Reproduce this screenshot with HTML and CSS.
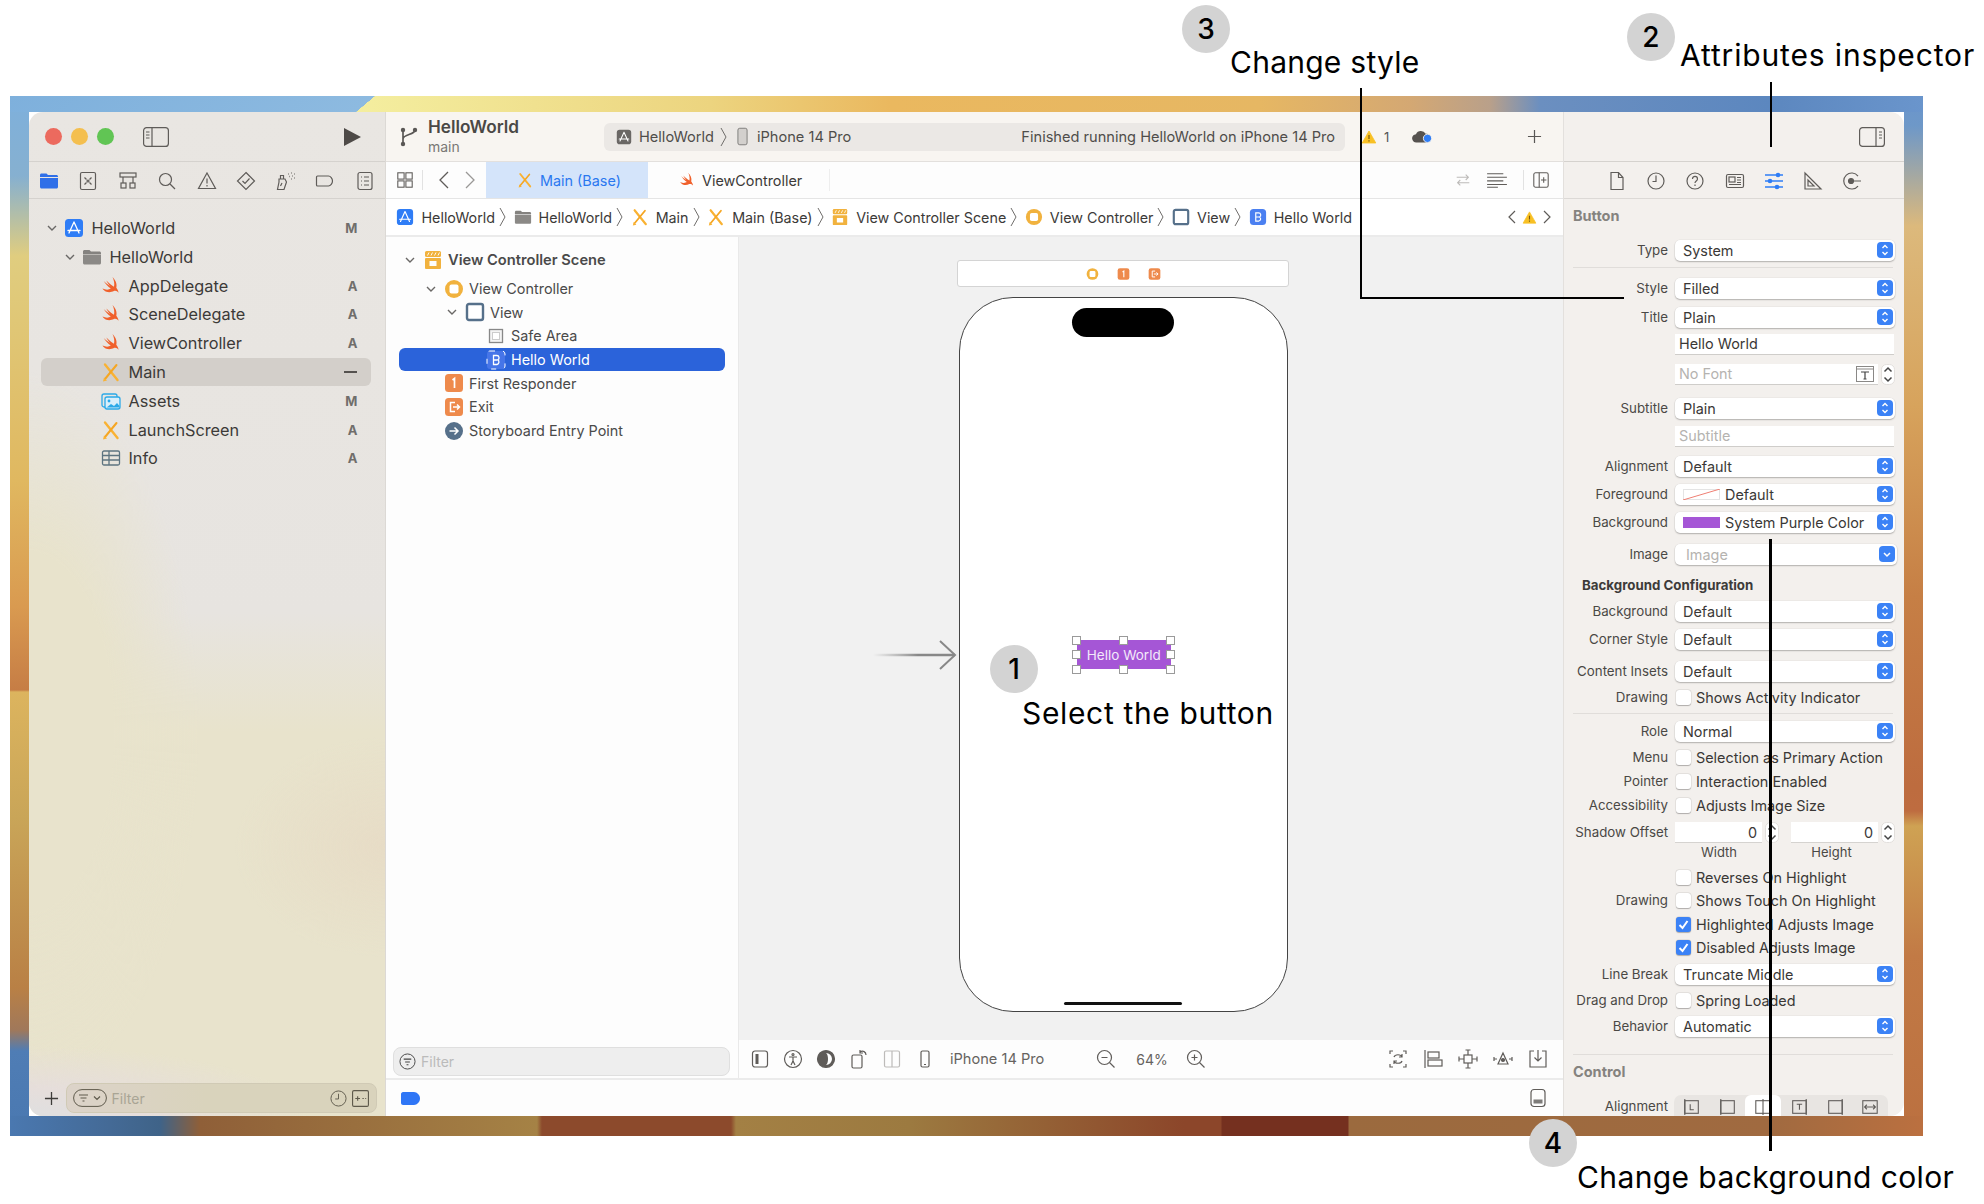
FILE: index.html
```html
<!DOCTYPE html>
<html lang="en">
<head>
<meta charset="utf-8">
<title>Xcode Attributes Inspector</title>
<link rel="stylesheet" href="styles.css">
</head>
<body>
<svg class="defs" width="0" height="0" aria-hidden="true">
  <defs>
    <symbol id="swift" viewBox="0 0 20 20"><path fill="#f0612c" d="M11.5 1c3 3 4.8 7 3.8 10.8 1.2 1.5 2.2 3.2 2.2 5-1-1.6-3-2.4-4.6-1.7C10 16.600 5.800 17 3 14.300c-.6-.6-1.100-1.100-1.500-1.800 3 1.500 6.200 1.500 8.300.1C7 10.500 4.200 7.600 2.700 5c2 1.900 4.500 3.900 6.600 5.200-1.500-1.600-3-3.700-4-5.700 2.500 2.500 5.100 4.700 7.700 6.200.8-3.200-.1-6.700-1.500-9.700z"/></symbol>
    <symbol id="sb" viewBox="0 0 20 20"><path d="M4 2.500 16.500 18" fill="none" stroke="#f9b233" stroke-width="2.400" stroke-linecap="round"/><path d="M15.500 3 4 17" fill="none" stroke="#f5a623" stroke-width="2" stroke-linecap="round"/><path d="M3 15.500l3 3-4 1z" fill="#f9b233"/></symbol>
    <symbol id="app" viewBox="0 0 20 20"><rect x="1" y="1" width="18" height="18" rx="3.500" fill="#2f7df6"/><path d="M10 4 5 15M10 4l5 11M4 12.500h12" fill="none" stroke="#fff" stroke-width="1.300" stroke-linecap="round"/></symbol>
    <symbol id="appg" viewBox="0 0 20 20"><rect x="1" y="1" width="18" height="18" rx="3.500" fill="#6a6765"/><path d="M10 4 5 15M10 4l5 11M4 12.500h12" fill="none" stroke="#fff" stroke-width="1.300" stroke-linecap="round"/></symbol>
    <symbol id="folder" viewBox="0 0 20 20"><path fill="#84827f" d="M1 4.500C1 3.700 1.700 3 2.500 3h5L9 4.500h8.500c.8 0 1.500.7 1.500 1.500v1H1z"/><path fill="#8b8986" d="M1 7.500h18V16c0 .8-.7 1.500-1.500 1.500h-15C1.700 17.500 1 16.800 1 16z"/></symbol>
    <symbol id="assets" viewBox="0 0 20 20"><rect x="1" y="3" width="15" height="13" rx="2" fill="none" stroke="#2ba9e8" stroke-width="1.300"/><rect x="4" y="6" width="15" height="12" rx="2" fill="#d9effb" stroke="#2ba9e8" stroke-width="1.300"/><circle cx="8" cy="10" r="1.400" fill="#2ba9e8"/><path d="M5 17l5-4 3 2 3-3 2.500 3v1.500H5z" fill="#2ba9e8"/></symbol>
    <symbol id="table" viewBox="0 0 20 20"><rect x="1.500" y="3" width="17" height="14" rx="1.500" fill="none" stroke="#5d7480" stroke-width="1.300"/><path d="M1.500 7.500h17M1.500 12h17M8 3v14" stroke="#5d7480" stroke-width="1.300"/></symbol>
    <symbol id="scene" viewBox="0 0 20 20"><rect x="2" y="1" width="16" height="6" rx="1.500" fill="#f1b23e"/><path d="M4.500 5.500 6 2.500M8 5.500l1.500-3M11.500 5.500l1.500-3M15 5.500l1.500-3" stroke="#fff" stroke-width=".9"/><path d="M3 8h14a1 1 0 0 1 1 1v9a1 1 0 0 1-1 1H3a1 1 0 0 1-1-1V9a1 1 0 0 1 1-1zm3.500 3v5h7v-5z" fill="#f1b23e" fill-rule="evenodd"/></symbol>
    <symbol id="vc" viewBox="0 0 20 20"><circle cx="10" cy="10" r="9" fill="#f1b23e"/><rect x="5.500" y="5.500" width="9" height="9" rx="2" fill="#fff"/></symbol>
    <symbol id="view" viewBox="0 0 20 20"><rect x="2" y="2" width="16" height="16" rx="2" fill="#fff" stroke="#56708a" stroke-width="2.400"/></symbol>
    <symbol id="safe" viewBox="0 0 20 20"><rect x="3.500" y="3.500" width="13" height="13" fill="#f4f4f4" stroke="#888" stroke-width="1.300"/><rect x="6.500" y="6.500" width="7" height="7" fill="#fff" stroke="#ccc"/></symbol>
    <symbol id="bbtn" viewBox="0 0 20 20"><rect x="1" y="1" width="18" height="18" rx="4" fill="#4b80f1"/><path d="M7.500 5.500h3.300a2.300 2.300 0 0 1 .9 4.400 2.500 2.500 0 0 1-.7 4.600H7.500zM7.500 10h3.500" fill="none" stroke="#fff" stroke-width="1.300"/></symbol>
    <symbol id="bsel" viewBox="0 0 20 20"><rect x="1" y="1" width="18" height="18" rx="3" fill="#4675e8" stroke="#fff" stroke-width="1" stroke-dasharray="5 8"/><path d="M7.500 5.500h3.300a2.300 2.300 0 0 1 .9 4.400 2.500 2.500 0 0 1-.7 4.600H7.500zM7.500 10h3.500" fill="none" stroke="#fff" stroke-width="1.300"/></symbol>
    <symbol id="first" viewBox="0 0 20 20"><rect x="1" y="1" width="18" height="18" rx="3.500" fill="#ee8a4c"/><path d="M8.500 7l2-1.500V15" fill="none" stroke="#fff" stroke-width="1.700"/></symbol>
    <symbol id="exit" viewBox="0 0 20 20"><rect x="1" y="1" width="18" height="18" rx="3.500" fill="#ee8a4c"/><path d="M11 5.500H6.500v9H11M9 10h6.500M13 7.500l2.500 2.500-2.500 2.500" fill="none" stroke="#fff" stroke-width="1.500"/></symbol>
    <symbol id="entry" viewBox="0 0 20 20"><circle cx="10" cy="10" r="9" fill="#56708a"/><path d="M5.500 10h8.500M10.500 6.500 14 10l-3.500 3.500" fill="none" stroke="#fff" stroke-width="1.500"/></symbol>
    <symbol id="chev-d" viewBox="0 0 10 10"><path d="M1 3l4 4 4-4" fill="none" stroke="#6a6866" stroke-width="1.400"/></symbol>
    <symbol id="crumb" viewBox="0 0 7 20"><path d="M1 1l5 9-5 9" fill="none" stroke="#6f6d6b" stroke-width="1"/></symbol>
    <symbol id="updown" viewBox="0 0 16 16"><rect width="16" height="16" rx="4" fill="#3b82f6"/><path d="M5.500 6 8 3.500 10.500 6M5.500 10 8 12.500 10.500 10" fill="none" stroke="#fff" stroke-width="1.400"/></symbol>
    <symbol id="down-b" viewBox="0 0 16 16"><rect width="16" height="16" rx="4" fill="#3b82f6"/><path d="M5 7l3 3 3-3" fill="none" stroke="#fff" stroke-width="1.500"/></symbol>
    <symbol id="stepper" viewBox="0 0 14 21"><rect x=".5" y=".5" width="13" height="20" rx="5" fill="#fff" stroke="#e2dfdc"/><path d="M3.500 7.500 7 4l3.500 3.500M3.500 13.500 7 17l3.500-3.500" fill="none" stroke="#444" stroke-width="1.500"/></symbol>
    <symbol id="warn" viewBox="0 0 20 20"><path d="M10 2.500 18.500 17.500h-17z" fill="#f8c024" stroke="#f8c024" stroke-linejoin="round"/><path d="M10 7.500v5M10 14v1.500" stroke="#7a5b10" stroke-width="1.500"/></symbol>
  </defs>
</svg>

<div class="page">
  <div class="wallpaper">
    <div class="window">

      <aside class="nav">
        <div class="titlebar">
          <div class="lights"><span class="light red"></span><span class="light yellow"></span><span class="light green"></span></div>
          <svg class="sidebar-toggle" viewBox="0 0 26 20"><rect x=".6" y=".6" width="24.800" height="18.800" rx="3" fill="none" stroke="#5f5c59" stroke-width="1.200"/><path d="M9 .6v18.800M3 5h3.500M3 8h3.500M3 11h3.500" stroke="#5f5c59" stroke-width="1.200"/></svg>
          <svg class="play" viewBox="0 0 18 18"><path d="M1 0l17 9-17 9z" fill="#4e4a47"/></svg>
        </div>
        <div class="nav-tabs">
          <svg viewBox="0 0 20 20"><path fill="#2f6fe8" d="M1 4c0-.8.7-1.500 1.500-1.500h5L9 4h8.500c.8 0 1.500.7 1.500 1.500V6H1z"/><path fill="#2f6fe8" d="M1 7h18v9c0 .8-.7 1.500-1.500 1.500h-15C1.700 17.500 1 16.800 1 16z"/></svg>
          <svg viewBox="0 0 20 20" class="st"><rect x="2.500" y="1.500" width="15" height="17" rx="1.500"/><path d="M6.500 6.500l2 2M13.500 6.500l-2 2M6.500 13.500l2-2M13.500 13.500l-2-2"/><circle cx="10" cy="10" r="1"/></svg>
          <svg viewBox="0 0 20 20" class="st"><rect x="2" y="2" width="16" height="4"/><path d="M5 6v6M15 6v6"/><rect x="3" y="12" width="5" height="5"/><rect x="12" y="12" width="5" height="5"/></svg>
          <svg viewBox="0 0 20 20" class="st"><circle cx="8.500" cy="8.500" r="6"/><path d="M13 13l5 5"/></svg>
          <svg viewBox="0 0 20 20" class="st"><path d="M10 2 18.500 17.500h-17zM10 7.500v5M10 14v1.500"/></svg>
          <svg viewBox="0 0 20 20" class="st"><path d="M10 1.500 18.500 10 10 18.500 1.500 10zM6.500 10l2.500 2.500 4.500-5"/></svg>
          <svg viewBox="0 0 20 20" class="st"><path d="M3 8h6l1.500 3-2.500 7.500H1.500L3 11zM4.500 4.500h3V8h-3zM6 12l-1.500 3"/><path d="M12 3h.6M15 2h.6M18 3h.6M13 5.500h.6M16 5h.6M15 8h.6M18 7h.6" stroke-width="1.400"/></svg>
          <svg viewBox="0 0 20 20" class="st"><path d="M2.500 5h11c2 0 4 2.500 4 5s-2 5-4 5h-11c-.6 0-1-.4-1-1V6c0-.6.4-1 1-1z"/></svg>
          <svg viewBox="0 0 20 20" class="st"><rect x="3" y="1.500" width="14" height="17" rx="2"/><path d="M6 6h1M9 6h5M6 10h1M9 10h5M6 14h1M9 14h5"/></svg>
        </div>
        <ul class="nav-list">
          <li class="nav-row d0"><svg class="chev"><use href="#chev-d"/></svg><svg class="nav-ic"><use href="#app"/></svg>HelloWorld<span class="status">M</span></li>
          <li class="nav-row d1"><svg class="chev"><use href="#chev-d"/></svg><svg class="nav-ic"><use href="#folder"/></svg>HelloWorld</li>
          <li class="nav-row d2"><svg class="nav-ic"><use href="#swift"/></svg>AppDelegate<span class="status">A</span></li>
          <li class="nav-row d2"><svg class="nav-ic"><use href="#swift"/></svg>SceneDelegate<span class="status">A</span></li>
          <li class="nav-row d2"><svg class="nav-ic"><use href="#swift"/></svg>ViewController<span class="status">A</span></li>
          <li class="nav-row d2 current"><svg class="nav-ic"><use href="#sb"/></svg>Main<span class="status dash"></span></li>
          <li class="nav-row d2"><svg class="nav-ic"><use href="#assets"/></svg>Assets<span class="status">M</span></li>
          <li class="nav-row d2"><svg class="nav-ic"><use href="#sb"/></svg>LaunchScreen<span class="status">A</span></li>
          <li class="nav-row d2"><svg class="nav-ic"><use href="#table"/></svg>Info<span class="status">A</span></li>
        </ul>
        <div class="nav-foot">
          <svg class="plus" viewBox="0 0 16 16"><path d="M8 1v14M1 8h14" stroke="#3e3c3a" stroke-width="1.400"/></svg>
          <div class="nav-filter">
            <svg class="filter-pill" viewBox="0 0 34 18"><rect x=".6" y=".6" width="32.800" height="16.800" rx="8.400" fill="none" stroke="#5f5a4c"/><path d="M6 6h9M7.500 9h6M9.500 12h2M21 7.500l3 3 3-3" fill="none" stroke="#5f5a4c" stroke-width="1.200"/></svg>
            <span class="ph">Filter</span>
            <svg class="clock" viewBox="0 0 18 18"><circle cx="9" cy="9" r="8" fill="none" stroke="#5f5a4c"/><path d="M9 4v5.500H5.500" fill="none" stroke="#5f5a4c"/></svg>
            <svg class="clock" viewBox="0 0 18 18"><rect x=".6" y=".6" width="16.800" height="16.800" rx="1.500" fill="none" stroke="#5f5a4c" stroke-width="1.200"/><path d="M3.500 9h5M6 6.500v5M11 9h1.500M14 9h1" stroke="#5f5a4c" stroke-width="1.200"/></svg>
          </div>
        </div>
      </aside>

      <main class="center">
        <div class="toolbar">
          <svg class="branch" viewBox="0 0 18 20"><circle cx="3" cy="3" r="2.200" fill="#5a5755"/><circle cx="3" cy="17" r="2.200" fill="#5a5755"/><circle cx="15" cy="3" r="2.200" fill="#5a5755"/><path d="M3 3v14M15 3c0 5-12 4-12 9" fill="none" stroke="#5a5755" stroke-width="1.700"/></svg>
          <div class="project"><strong>HelloWorld</strong><span>main</span></div>
          <div class="pill">
            <svg class="pill-ic"><use href="#appg"/></svg>
            <span>HelloWorld</span>
            <svg class="crumb"><use href="#crumb"/></svg>
            <svg class="phone-ic" viewBox="0 0 12 20"><rect x="1" y="1" width="10" height="18" rx="2" fill="#d3d0cd" stroke="#7a7876"/></svg>
            <span>iPhone 14 Pro</span>
            <span class="pill-status">Finished running HelloWorld on iPhone 14 Pro</span>
          </div>
          <svg class="warn-ic"><use href="#warn"/></svg>
          <span class="warn-count">1</span>
          <svg class="cloud" viewBox="0 0 24 16"><path d="M6 14.500a4.500 4.500 0 0 1-.6-9A6 6 0 0 1 16 5a4.500 4.500 0 0 1 2 9.500z" fill="#56524f"/><circle cx="18" cy="10" r="4.500" fill="#2f7df6" stroke="#f8f5f1"/></svg>
          <svg class="add" viewBox="0 0 16 16"><path d="M8 1v14M1 8h14" stroke="#5a5755" stroke-width="1.300"/></svg>
        </div>
        <div class="tabbar">
          <svg class="tb-grid st" viewBox="0 0 20 20"><rect x="2" y="2" width="7" height="7"/><rect x="11" y="2" width="7" height="7"/><rect x="2" y="11" width="7" height="7"/><rect x="11" y="11" width="7" height="7"/></svg>
          <span class="tb-sep"></span>
          <svg class="tb-arrow" viewBox="0 0 10 18"><path d="M9 1 1 9l8 8" fill="none" stroke="#5f5c59" stroke-width="1.300"/></svg>
          <svg class="tb-arrow dim" viewBox="0 0 10 18"><path d="M1 1l8 8-8 8" fill="none" stroke="#9a9896" stroke-width="1.300"/></svg>
          <div class="tab active"><svg class="tab-ic"><use href="#sb"/></svg>Main (Base)</div>
          <div class="tab"><svg class="tab-ic"><use href="#swift"/></svg>ViewController</div>
          <div class="tabbar-end">
            <svg class="st light-st" viewBox="0 0 20 20"><path d="M3 7h13M13 4l3 3-3 3M17 13H4M7 10l-3 3 3 3"/></svg>
            <svg class="st" viewBox="0 0 24 20"><path d="M1 3h18M1 7h22M1 11h18M1 15h22M1 18h12"/></svg>
            <span class="tb-sep"></span>
            <svg class="st" viewBox="0 0 20 20"><rect x="2" y="2" width="16" height="16" rx="2"/><path d="M8 2v16M13 7v6M10 10h6"/></svg>
          </div>
        </div>
        <div class="jumpbar">
          <svg class="jb-ic"><use href="#app"/></svg><span>HelloWorld</span><svg class="crumb"><use href="#crumb"/></svg>
          <svg class="jb-ic"><use href="#folder"/></svg><span>HelloWorld</span><svg class="crumb"><use href="#crumb"/></svg>
          <svg class="jb-ic"><use href="#sb"/></svg><span>Main</span><svg class="crumb"><use href="#crumb"/></svg>
          <svg class="jb-ic"><use href="#sb"/></svg><span>Main (Base)</span><svg class="crumb"><use href="#crumb"/></svg>
          <svg class="jb-ic"><use href="#scene"/></svg><span>View Controller Scene</span><svg class="crumb"><use href="#crumb"/></svg>
          <svg class="jb-ic"><use href="#vc"/></svg><span>View Controller</span><svg class="crumb"><use href="#crumb"/></svg>
          <svg class="jb-ic"><use href="#view"/></svg><span>View</span><svg class="crumb"><use href="#crumb"/></svg>
          <svg class="jb-ic"><use href="#bbtn"/></svg><span>Hello World</span>
          <div class="jb-end">
            <svg class="jb-arrow" viewBox="0 0 10 16"><path d="M8 2 2 8l6 6" fill="none" stroke="#5f5c59" stroke-width="1.200"/></svg>
            <svg class="jb-warn"><use href="#warn"/></svg>
            <svg class="jb-arrow" viewBox="0 0 10 16"><path d="M2 2l6 6-6 6" fill="none" stroke="#5f5c59" stroke-width="1.200"/></svg>
          </div>
        </div>
        <div class="editor">
          <section class="outline">
            <ul class="ol-list">
              <li class="ol-row bold i0"><svg class="chev"><use href="#chev-d"/></svg><svg class="ol-ic"><use href="#scene"/></svg>View Controller Scene</li>
              <li class="ol-row i1 first-child"><svg class="chev"><use href="#chev-d"/></svg><svg class="ol-ic"><use href="#vc"/></svg>View Controller</li>
              <li class="ol-row i2"><svg class="chev"><use href="#chev-d"/></svg><svg class="ol-ic"><use href="#view"/></svg>View</li>
              <li class="ol-row i3"><svg class="ol-ic"><use href="#safe"/></svg>Safe Area</li>
              <li class="ol-row i3 selected"><svg class="ol-ic"><use href="#bsel"/></svg>Hello World</li>
              <li class="ol-row i4"><svg class="ol-ic"><use href="#first"/></svg>First Responder</li>
              <li class="ol-row i4"><svg class="ol-ic"><use href="#exit"/></svg>Exit</li>
              <li class="ol-row i4"><svg class="ol-ic"><use href="#entry"/></svg>Storyboard Entry Point</li>
            </ul>
            <div class="ol-filter">
              <svg class="ol-filter-ic" viewBox="0 0 18 18"><circle cx="9" cy="9" r="8" fill="none" stroke="#444"/><path d="M5 6.500h8M6.500 9.500h5M8 12.500h2" stroke="#444" stroke-width="1.200"/></svg>
              <span class="ph">Filter</span>
            </div>
          </section>
          <section class="canvas-col">
            <div class="canvas">
              <svg class="entry-arrow" viewBox="0 0 84 30"><defs><linearGradient id="fade" gradientUnits="userSpaceOnUse" x1="0" x2="82" y1="15" y2="15"><stop offset="0" stop-color="#999" stop-opacity="0"/><stop offset=".55" stop-color="#888"/></linearGradient></defs><path d="M0 15h82" stroke="url(#fade)" stroke-width="2.400" fill="none"/><path d="M67 1l15 14-15 14" stroke="#888" stroke-width="2" fill="none"/></svg>
              <div class="dock">
                <svg class="dock-ic"><use href="#vc"/></svg>
                <svg class="dock-ic"><use href="#first"/></svg>
                <svg class="dock-ic"><use href="#exit"/></svg>
              </div>
              <div class="phone">
                <span class="notch"></span>
                <button class="hello" type="button">Hello World
                  <i class="h tl"></i><i class="h tc"></i><i class="h tr"></i><i class="h ml"></i><i class="h mr"></i><i class="h bl"></i><i class="h bc"></i><i class="h br"></i>
                </button>
                <span class="home"></span>
              </div>
            </div>
            <div class="canvas-bar">
              <svg class="st" viewBox="0 0 20 20"><rect x="2.500" y="2" width="15" height="16" rx="2.500"/><path d="M7 5v10" stroke-width="3"/></svg>
              <svg class="st" viewBox="0 0 20 20"><circle cx="10" cy="10" r="8.500"/><circle cx="10" cy="5.500" r="1"/><path d="M6 8h8M10 8v4M10 12l-2 4M10 12l2 4"/></svg>
              <svg class="st" viewBox="0 0 20 20"><circle cx="10" cy="10" r="8.500" fill="#5f5c59"/><path d="M10 4a6 6 0 0 1 0 12c1.500-1 2-3.500 2-6s-.5-5-2-6z" fill="#fff" stroke="none"/></svg>
              <svg class="st" viewBox="0 0 20 20"><rect x="3" y="6" width="10" height="13" rx="1.500"/><path d="M11 3c3-2 6 0 6 3M11 1v3h3"/></svg>
              <svg class="st light-st" viewBox="0 0 20 20"><rect x="2.500" y="2" width="15" height="16" rx="1.500"/><path d="M10 2v16"/></svg>
              <svg class="st" viewBox="0 0 20 20"><rect x="6" y="2" width="8" height="16" rx="1.500"/><path d="M9 15.500h2"/></svg>
              <span class="cb-device">iPhone 14 Pro</span>
              <svg class="st cb-zoom" viewBox="0 0 20 20"><circle cx="8.500" cy="8.500" r="7"/><path d="M13.500 13.500l5 5M5.500 8.500h6"/></svg>
              <span class="cb-pct">64%</span>
              <svg class="st" viewBox="0 0 20 20"><circle cx="8.500" cy="8.500" r="7"/><path d="M13.500 13.500l5 5M5.500 8.500h6M8.500 5.500v6"/></svg>
              <div class="cb-end">
                <svg class="st" viewBox="0 0 20 20"><path d="M2 5V2h3M15 2h3v3M2 15v3h3M15 18h3v-3M6 8c1-3 7-3 8 0M14 12c-1 3-7 3-8 0M14 5v3h-3M6 15v-3h3"/></svg>
                <svg class="st" viewBox="0 0 20 20"><path d="M2 1v18"/><rect x="5" y="3" width="11" height="6"/><rect x="5" y="11" width="14" height="6"/></svg>
                <svg class="st" viewBox="0 0 20 20"><rect x="6" y="6" width="8" height="8"/><path d="M10 1v5M10 14v5M7.500 1h5M7.500 19h5M1 10h5M14 10h5M1 7.500v5M19 7.500v5"/></svg>
                <svg class="st" viewBox="0 0 20 20"><path d="M10 4l5 11H5zM1 10h3M16 10h3M1 8v4M19 8v4"/><circle cx="10" cy="11" r="1.500" fill="#5f5c59"/></svg>
                <svg class="st" viewBox="0 0 20 20"><path d="M6 2H2v16h16V2h-4M10 1v11M6.500 8.500 10 12l3.500-3.500"/></svg>
              </div>
            </div>
          </section>
        </div>
        <div class="debugbar">
          <svg class="tag" viewBox="0 0 20 13"><path d="M2 0h11c3 0 6 3 6 6.500S16 13 13 13H2c-1 0-2-1-2-2V2c0-1 1-2 2-2z" fill="#2f76f6"/></svg>
          <svg class="st debug-ic" viewBox="0 0 20 20"><rect x="3" y="1.500" width="14" height="17" rx="3"/><rect x="5.500" y="11.500" width="9" height="4" fill="#7d7b79" stroke="none"/></svg>
        </div>
      </main>

      <aside class="inspector">
        <div class="titlebar insp-title">
          <svg class="panel-toggle" viewBox="0 0 26 20"><rect x=".6" y=".6" width="24.800" height="18.800" rx="3" fill="none" stroke="#5f5c59" stroke-width="1.200"/><path d="M17 .6v18.800M20 5h3M20 8h3M20 11h3" stroke="#5f5c59" stroke-width="1.200"/></svg>
        </div>
        <div class="insp-tabs">
          <svg viewBox="0 0 20 20" class="st"><path d="M4 1.500h7.500l4.500 5v12H4zM11.500 1.500v5H16"/></svg>
          <svg viewBox="0 0 20 20" class="st"><circle cx="10" cy="10" r="8"/><path d="M10 4.500v6H6.500"/></svg>
          <svg viewBox="0 0 20 20" class="st"><circle cx="10" cy="10" r="8"/><path d="M7.500 8c0-3.500 5-3.500 5 0 0 2-2.500 2-2.500 4M10 13.500V15"/></svg>
          <svg viewBox="0 0 20 20" class="st"><rect x="1.500" y="3.500" width="17" height="13" rx="1.500"/><rect x="4" y="6" width="6" height="5"/><path d="M12 6.500h4M12 9h4M12 11.500h4M4 13.500h12"/></svg>
          <svg viewBox="0 0 20 20" class="st blue-st"><path d="M1 4h18M1 10h18M1 16h18"/><circle cx="14" cy="4" r="1.500" fill="#2f7df6"/><circle cx="6" cy="10" r="1.500" fill="#2f7df6"/><circle cx="13" cy="16" r="1.500" fill="#2f7df6"/></svg>
          <svg viewBox="0 0 20 20" class="st"><path d="M2 2v16h16zM5 9v6h6z"/></svg>
          <svg viewBox="0 0 20 20" class="st"><path d="M16 5a8 8 0 1 0 0 10M8 10h11"/><circle cx="9" cy="10" r="2.500" fill="#5f5c59"/></svg>
        </div>
        <div class="form">
          <div class="sect-head g6">Button</div>
          <div class="row g12"><span class="lbl">Type</span><div class="select">System<svg class="ud"><use href="#updown"/></svg></div></div>
          <div class="sep g6"></div>
          <div class="row g9"><span class="lbl">Style</span><div class="select">Filled<svg class="ud"><use href="#updown"/></svg></div></div>
          <div class="row g7"><span class="lbl">Title</span><div class="select">Plain<svg class="ud"><use href="#updown"/></svg></div></div>
          <div class="row g5"><span class="lbl"></span><div class="field">Hello World</div></div>
          <div class="row g8"><span class="lbl"></span><div class="field narrow muted">No Font<svg class="t-ic" viewBox="0 0 18 16"><rect x=".5" y=".5" width="17" height="15" fill="#fff" stroke="#8a8886"/><path d="M1 3h16" stroke="#8a8886"/><path d="M5 6h8M9 6v7M7.500 13h3" stroke="#444" stroke-width="1.200" fill="none"/></svg></div><svg class="stepper"><use href="#stepper"/></svg></div>
          <div class="row g12"><span class="lbl">Subtitle</span><div class="select">Plain<svg class="ud"><use href="#updown"/></svg></div></div>
          <div class="row g6"><span class="lbl"></span><div class="field muted">Subtitle</div></div>
          <div class="row g8"><span class="lbl">Alignment</span><div class="select">Default<svg class="ud"><use href="#updown"/></svg></div></div>
          <div class="row g6"><span class="lbl">Foreground</span><div class="select"><svg class="swatch" viewBox="0 0 37 11" preserveAspectRatio="none"><rect x=".5" y=".5" width="36" height="10" fill="#fff" stroke="#e4e4e4"/><path d="M0 11 37 0" stroke="#ef7f73"/></svg>Default<svg class="ud"><use href="#updown"/></svg></div></div>
          <div class="row g6"><span class="lbl">Background</span><div class="select"><span class="swatch purple"></span>System Purple Color<svg class="ud"><use href="#updown"/></svg></div></div>
          <div class="row g10"><span class="lbl">Image</span><div class="select combo muted">Image<svg class="ud"><use href="#down-b"/></svg></div></div>
          <div class="sub-head g9">Background Configuration</div>
          <div class="row g4"><span class="lbl">Background</span><div class="select">Default<svg class="ud"><use href="#updown"/></svg></div></div>
          <div class="row g6"><span class="lbl">Corner Style</span><div class="select">Default<svg class="ud"><use href="#updown"/></svg></div></div>
          <div class="row g10"><span class="lbl">Content Insets</span><div class="select">Default<svg class="ud"><use href="#updown"/></svg></div></div>
          <div class="row g4"><span class="lbl">Drawing</span><span class="check"></span><span class="check-text">Shows Activity Indicator</span></div>
          <div class="sep g5"></div>
          <div class="row g6"><span class="lbl">Role</span><div class="select">Normal<svg class="ud"><use href="#updown"/></svg></div></div>
          <div class="row g4"><span class="lbl">Menu</span><span class="check"></span><span class="check-text">Selection as Primary Action</span></div>
          <div class="row g2"><span class="lbl">Pointer</span><span class="check"></span><span class="check-text">Interaction Enabled</span></div>
          <div class="row g2"><span class="lbl">Accessibility</span><span class="check"></span><span class="check-text">Adjusts Image Size</span></div>
          <div class="row g5"><span class="lbl">Shadow Offset</span><div class="num">0</div><svg class="stepper num-step"><use href="#stepper"/></svg><div class="num second">0</div><svg class="stepper num-step"><use href="#stepper"/></svg></div>
          <div class="num-labels g1"><span>Width</span><span>Height</span></div>
          <div class="row g6"><span class="lbl"></span><span class="check"></span><span class="check-text">Reverses On Highlight</span></div>
          <div class="row g1"><span class="lbl">Drawing</span><span class="check"></span><span class="check-text">Shows Touch On Highlight</span></div>
          <div class="row g2"><span class="lbl"></span><span class="check on"><svg viewBox="0 0 15 15"><path d="M3.500 8l3 3 5-7" fill="none" stroke="#fff" stroke-width="2"/></svg></span><span class="check-text">Highlighted Adjusts Image</span></div>
          <div class="row g1"><span class="lbl"></span><span class="check on"><svg viewBox="0 0 15 15"><path d="M3.500 8l3 3 5-7" fill="none" stroke="#fff" stroke-width="2"/></svg></span><span class="check-text">Disabled Adjusts Image</span></div>
          <div class="row g5"><span class="lbl">Line Break</span><div class="select">Truncate Middle<svg class="ud"><use href="#updown"/></svg></div></div>
          <div class="row g4"><span class="lbl">Drag and Drop</span><span class="check"></span><span class="check-text">Spring Loaded</span></div>
          <div class="row g4"><span class="lbl">Behavior</span><div class="select">Automatic<svg class="ud"><use href="#updown"/></svg></div></div>
          <div class="sep g17"></div>
          <div class="sect-head g6">Control</div>
          <div class="row top g12"><span class="lbl">Alignment</span>
            <div class="segments">
              <span class="seg"><svg viewBox="0 0 20 20" class="st"><path d="M2 1v18"/><rect x="2" y="3" width="15" height="14"/><path d="M8 7v6h4"/></svg></span>
              <span class="seg"><svg viewBox="0 0 20 20" class="st"><path d="M2 1v18"/><rect x="2" y="3" width="15" height="14"/></svg></span>
              <span class="seg on"><svg viewBox="0 0 20 20" class="st"><path d="M10 1v18"/><rect x="2" y="3" width="16" height="14"/></svg></span>
              <span class="seg"><svg viewBox="0 0 20 20" class="st"><path d="M18 1v18"/><rect x="3" y="3" width="15" height="14"/><path d="M7.500 7h6M10.500 7v6"/></svg></span>
              <span class="seg"><svg viewBox="0 0 20 20" class="st"><path d="M18 1v18"/><rect x="3" y="3" width="15" height="14"/></svg></span>
              <span class="seg"><svg viewBox="0 0 20 20" class="st"><rect x="2" y="3" width="16" height="14"/><path d="M4 10h12M6.500 7.500 4 10l2.500 2.500M13.500 7.500 16 10l-2.500 2.500"/></svg></span>
            </div>
          </div>
        </div>
      </aside>
    </div>
  </div>

  <div class="callout c1"><span class="badge">1</span></div>
  <div class="note n1">Select the button</div>
  <div class="callout c2"><span class="badge">2</span></div>
  <div class="note n2">Attributes inspector</div>
  <div class="callout c3"><span class="badge">3</span></div>
  <div class="note n3">Change style</div>
  <div class="callout c4"><span class="badge">4</span></div>
  <div class="note n4">Change background color</div>
  <span class="line l2"></span>
  <span class="line l3"></span>
  <span class="line l4"></span>
</div>
</body>
</html>
```

FILE: styles.css
```css
* { box-sizing: border-box; }
html, body { margin: 0; padding: 0; background: #fff; }
body { font-family: Inter, "Liberation Sans", sans-serif; color: #3d3b39; }
ul { list-style: none; margin: 0; padding: 0; }
.defs { position: absolute; }
svg { display: block; flex: none; }
.st { fill: none; stroke: #5f5c59; stroke-width: 1.2; }
.light-st { stroke: #bdbbb9; }
.blue-st { stroke: #2f7df6; stroke-width: 1.6; }

.page { position: relative; width: 1984px; height: 1204px; padding: 96px 0 0 10px; overflow: hidden; }

.wallpaper {
  width: 1913px; height: 1040px; padding: 16px 19px 20px 18.6px;
  background:
    linear-gradient(90deg, #4a78b0 0, #446a96 100px, #3f6388 150px, #8f5f38 190px, #a58245 527px, #8c4a2c 532px, #8c4a2c 721px, #a38044 726px, #9c7a40 900px, #8c462a 1174px, #8c462a 1211px, #75301f 1212px, #75301f 1338px, #9b6a3e 1339px, #a06a40 1760px, #bb7040 1913px) 0 100% / 100% 20px no-repeat,
    linear-gradient(140deg, #7eb0dc 0, #8dbae0 95%, transparent 95.1%) 0 0 / 365px 16px no-repeat,
    linear-gradient(90deg, #f4ee9f 350px, #ecd47f 700px, #eab85f 880px, #e6b763 1250px, #d4a873 1400px, #b9a08a 1480px, #6b8fc0 1530px, #5c87bf 1760px, #6a95cc 1913px) 0 0 / 100% 16px no-repeat,
    linear-gradient(180deg, #7eb0dc 0, #86b0d0 80px, #e0cd7f 160px, #e0b860 384px, #d99a50 511px, #c67d45 594px, #dcb45e 596px, #c9a558 722px, #b98045 892px, #a0785a 934px, #4f7db5 955px, #4a78b0 1040px) 0 0 / 19px 100% no-repeat,
    linear-gradient(180deg, #6a95cc 0, #6e98c8 30px, #dcb97c 130px, #d7a35c 310px, #c67f45 500px, #bd6c3f 690px, #be6c40 715px, #cfa253 730px, #c27a45 860px, #bb7040 1040px) 100% 0 / 19px 100% no-repeat;
}

.window { display: flex; height: 100%; border-radius: 14px; overflow: hidden; background: #fff; }

/* Navigator */
.nav { width: 357.4px; flex: none; display: flex; flex-direction: column; border-right: 1px solid #dcd9d5;
  background:
    radial-gradient(ellipse 280px 70px at 0 100%, #dfdfe0 0, #e6dedb 40%, rgba(230,222,219,0) 100%),
    radial-gradient(ellipse 150px 110px at 100% 735px, #e7dcc6 0, rgba(231,220,198,0) 100%),
    radial-gradient(ellipse 170px 360px at 0 620px, #e8e3cc 50%, rgba(232,227,204,0) 100%),
    linear-gradient(180deg, #e9e6e2 0, #e7e4e0 500px, #e8e3cc 620px, #e8e3cc 100%); }
.titlebar { height: 50px; display: flex; align-items: center; flex: none; border-bottom: 1px solid #d5d2ce; }
.nav .titlebar { padding: 0 0 0 16px; }
.lights { display: flex; gap: 9.4px; }
.light { width: 17px; height: 17px; border-radius: 50%; }
.red { background: #ec6a5e; }
.yellow { background: #f4bf4f; }
.green { background: #61c554; }
.sidebar-toggle { width: 26px; height: 20px; margin-left: 29px; }
.play { width: 18px; height: 18px; margin-left: 174px; }
.nav-tabs { height: 37px; flex: none; display: flex; align-items: center; gap: 19.5px; padding: 1px 0 0 10.4px; border-bottom: 1px solid #d5d2ce; }
.nav-tabs svg { width: 20px; height: 20px; }
.nav-list { padding: 14.6px 0 0; margin: 0 13.6px 0 12.4px; flex: 1; }
.nav-row { height: 28.8px; display: flex; align-items: center; font-size: 16.3px; color: #3c3a38; white-space: nowrap; border-radius: 6px; padding-right: 14px; }
.d0 { padding-left: 6px; }
.d1 { padding-left: 24px; }
.d2 { padding-left: 60px; }
.current { background: #d3cfca; }
.chev { width: 10px; height: 10px; margin-right: 7px; }
.nav-ic { width: 20px; height: 20px; margin-right: 7.5px; }
.status { margin-left: auto; font-size: 13px; font-weight: 700; color: #706e6b; }
.dash { width: 13px; height: 2px; background: #55524f; }
.nav-foot { height: 33px; display: flex; align-items: center; padding: 0 8px 3px 15px; gap: 7px; flex: none; }
.plus { width: 15px; height: 15px; }
.nav-filter { flex: 1; height: 30px; display: flex; align-items: center; padding: 0 7px 0 6px; gap: 5px; background: linear-gradient(90deg, #dcd3c9, #d9d3bc 45%); border: 1px solid #d0cab5; border-radius: 8px; }
.filter-pill { width: 34px; height: 18px; }
.ph { color: #a9a595; font-size: 14px; }
.clock { width: 17px; height: 17px; }
.nav-filter .ph + .clock { margin-left: auto; }

/* Center */
.center { flex: 1; min-width: 0; display: flex; flex-direction: column; background: #fdfdfd; }
.toolbar { height: 50px; flex: none; display: flex; align-items: center; background: #f8f5f1; border-bottom: 1px solid #e3e0dd; padding-left: 14px; }
.branch { width: 18px; height: 20px; }
.project { display: flex; flex-direction: column; margin-left: 10px; width: 176px; }
.project strong { font-size: 17.2px; font-weight: 600; color: #4a4845; line-height: 20px; }
.project span { font-size: 14px; color: #7a7875; line-height: 19px; }
.pill { width: 741px; height: 28px; border-radius: 6px; background: #ebe8e5; display: flex; align-items: center; padding: 0 10px 0 12px; font-size: 14.6px; color: #4f4d4a; white-space: nowrap; }
.pill-ic { width: 16px; height: 16px; margin-right: 7px; }
.crumb { width: 7px; height: 20px; margin: 0 6px; }
.phone-ic { width: 11px; height: 19px; margin: 0 9px 0 4px; }
.pill-status { margin-left: auto; }
.warn-ic { width: 16px; height: 16px; margin-left: 16px; }
.warn-count { font-size: 13px; margin-left: 7px; color: #555; }
.cloud { width: 22px; height: 15px; margin-left: 22px; }
.add { width: 15px; height: 15px; margin-left: 94px; }

.tabbar { height: 37px; flex: none; display: flex; align-items: center; background: #fdfdfd; border-bottom: 1px solid #e5e5e5; padding-left: 10px; }
.tb-grid { width: 18px; height: 18px; }
.tb-sep { width: 1px; height: 20px; background: #e2e2e2; margin-left: 8px; }
.tb-arrow { width: 10px; height: 18px; margin-left: 16px; }
.tb-arrow.dim { margin-left: 16px; }
.tab { width: 162px; height: 36px; display: flex; align-items: center; padding-left: 32px; font-size: 14.4px; color: #3c3a38; }
.tb-arrow.dim + .tab { margin-left: 11px; }
.tab.active { background: #d4e4fa; color: #2a78f0; padding-left: 31px; }
.tab + .tab { width: 182px; border-right: 1px solid #eee; height: 22px; padding-left: 31px; }
.tab-ic { width: 16px; height: 16px; margin-right: 7px; }
.tabbar-end { margin-left: auto; display: flex; align-items: center; gap: 12px; padding-right: 12px; }
.tabbar-end svg { width: 20px; height: 18px; }
.tabbar-end svg:nth-child(2) { width: 24px; }
.tabbar-end .tb-sep { margin: 0 -5px 0 2px; }

.jumpbar { height: 38px; flex: none; display: flex; align-items: center; padding-left: 10.5px; font-size: 14.3px; color: #3c3a38; white-space: nowrap; border-bottom: 2px solid #ebebeb; background: #fff; }
.jumpbar .crumb { margin: 0 7.6px 0 4px; }
.jb-ic { width: 18px; height: 18px; margin-right: 7px; }
.jb-end { margin-left: auto; display: flex; align-items: center; padding-right: 11px; gap: 5px; }
.jb-arrow { width: 10px; height: 16px; }
.jb-warn { width: 15px; height: 15px; }

.editor { flex: 1; min-height: 0; display: flex; border-bottom: 2px solid #ebebeb; }
.outline { width: 353px; flex: none; display: flex; flex-direction: column; background: #fdfdfd; border-right: 1px solid #e9e9e9; }
.ol-list { flex: 1; padding-top: 11px; margin: 0 13px; }
.ol-row { height: 23.7px; display: flex; align-items: center; font-size: 14.4px; color: #4a4a4a; white-space: nowrap; border-radius: 6px; }
.ol-row .chev { margin-right: 8px; }
.ol-ic { width: 20px; height: 20px; margin-right: 5px; }
.bold { font-weight: 600; font-size: 14.7px; }
.first-child { margin-top: 5px; }
.i0 { padding-left: 6px; }
.i1 { padding-left: 27px; }
.i2 { padding-left: 48px; }
.i3 { padding-left: 87px; }
.i4 { padding-left: 45px; }
.selected { background: #2b63da; color: #fff; }
.ol-filter { height: 29px; margin: 0 8px 2px 7px; display: flex; align-items: center; gap: 5px; padding-left: 5px; border-radius: 8px; background: #eeeeee; border: 1px solid #dfdfdf; }
.ol-filter-ic { width: 17px; height: 17px; }
.ol-filter .ph { color: #bbb; }

.canvas-col { flex: 1; min-width: 0; display: flex; flex-direction: column; }
.canvas { position: relative; flex: 1; min-height: 0; background: #f1f1f1; padding: 23px 0 0 220px; display: flex; flex-direction: column; gap: 10px; }
.entry-arrow { position: absolute; left: 134px; top: 403px; width: 84px; height: 30px; }
.dock { width: 332.5px; height: 27px; margin-left: -2px; background: #fff; border: 1px solid #d4d4d4; border-radius: 3px; display: flex; align-items: center; justify-content: center; gap: 18px; flex: none; }
.dock-ic { width: 13px; height: 14px; }
.phone { position: relative; width: 329.5px; height: 715px; flex: none; background: #fff; border: 1.5px solid #444; border-radius: 54px; display: flex; align-items: center; justify-content: center; }
.notch { position: absolute; top: 10px; left: 112px; width: 102px; height: 29px; background: #000; border-radius: 15px; }
.home { position: absolute; bottom: 6px; left: 104px; width: 118px; height: 3px; background: #111; border-radius: 2px; }
.hello { position: relative; width: 94px; height: 29px; border: 0; padding: 0; background: #a556d6; color: #f3e9fa; font: 13.5px Inter, sans-serif; white-space: nowrap; }
.h { position: absolute; width: 9px; height: 9px; background: #fff; border: 1px solid #9a9a9a; }
.tl { left: -4.5px; top: -4.5px; } .tc { left: 42.5px; top: -4.5px; } .tr { right: -4.5px; top: -4.5px; }
.ml { left: -4.5px; top: 10px; } .mr { right: -4.5px; top: 10px; }
.bl { left: -4.5px; bottom: -4.5px; } .bc { left: 42.5px; bottom: -4.5px; } .br { right: -4.5px; bottom: -4.5px; }

.canvas-bar { height: 38px; flex: none; display: flex; align-items: center; gap: 13px; padding-left: 11px; background: #fdfdfd; }
.canvas-bar > svg { width: 20px; height: 20px; }
.cb-device { font-size: 14.6px; color: #66635f; margin-left: 2px; white-space: nowrap; }
.cb-zoom { margin-left: 39px; }
.cb-pct { font-size: 14px; color: #66635f; margin: 0 5px 0 7px; }
.cb-end { margin-left: auto; display: flex; gap: 15px; padding-right: 15px; }
.cb-end svg { width: 20px; height: 20px; }

.debugbar { height: 36px; flex: none; display: flex; align-items: center; justify-content: space-between; padding: 0 15px; background: #fdfdfd; }
.tag { width: 20px; height: 13px; }
.debug-ic { width: 20px; height: 20px; }

/* Inspector */
.inspector { width: 341px; flex: none; background: #f3f0ed; border-left: 1px solid #e3e0dd; display: flex; flex-direction: column; }
.insp-title { justify-content: flex-end; padding-right: 19px; }
.panel-toggle { width: 26px; height: 20px; }
.insp-tabs { height: 37px; flex: none; display: flex; align-items: center; gap: 19.2px; padding: 1px 0 0 43px; border-bottom: 1px solid #dcd9d6; }
.insp-tabs svg { width: 20px; height: 20px; }
.form { padding: 0 0 0 9px; }
.g1 { margin-top: 1px; } .g2 { margin-top: 2px; } .g4 { margin-top: 4px; } .g5 { margin-top: 5px; }
.g6 { margin-top: 6px; } .g7 { margin-top: 7px; } .g8 { margin-top: 8px; } .g9 { margin-top: 9px; }
.g10 { margin-top: 10px; } .g12 { margin-top: 12px; } .g17 { margin-top: 17px; }
.sect-head { height: 22px; line-height: 22px; font-size: 14.5px; font-weight: 700; color: #85837f; }
.sub-head { height: 22px; line-height: 22px; font-size: 13.3px; font-weight: 700; color: #3d3b39; padding-left: 9px; white-space: nowrap; }
.sep { height: 1px; width: 320px; background: #e0ddda; }
.row { height: 22px; display: flex; align-items: center; }
.row.top { align-items: flex-start; }
.row.top .lbl { line-height: 22px; }
.lbl { width: 95px; margin-right: 7px; font-size: 13.3px; text-align: right; color: #4a4845; white-space: nowrap; flex: none; }
.select { position: relative; width: 220px; height: 21px; border-radius: 5px; background: #fff; box-shadow: 0 1px 1.5px rgba(0,0,0,.25), 0 0 0 .5px rgba(0,0,0,.05); display: flex; align-items: center; padding-left: 8px; font-size: 14.4px; color: #3a3836; white-space: nowrap; }
.ud { position: absolute; right: 2px; top: 2.5px; width: 16px; height: 16px; }
.combo { width: 222px; padding-left: 11px; }
.field { position: relative; width: 219px; height: 21px; background: #fff; border-bottom: 1px solid #cfcdca; display: flex; align-items: center; padding-left: 4px; font-size: 14.4px; color: #3a3836; }
.field.narrow { width: 203px; }
.select.muted, .field.muted { color: #b5b3b0; }
.t-ic { position: absolute; right: 4px; top: 2px; width: 18px; height: 16px; }
.stepper { width: 14px; height: 21px; margin-left: 3px; }
.swatch { width: 37px; height: 11px; margin-right: 5px; flex: none; }
.swatch.purple { background: #a556d6; }
.check { width: 15px; height: 15px; background: #fff; border-radius: 3px; box-shadow: 0 .5px 1px rgba(0,0,0,.25), 0 0 0 .5px rgba(0,0,0,.08); flex: none; margin-left: 1px; }
.check.on { background: #3b82f6; }
.check-text { margin-left: 5px; font-size: 14.4px; color: #3a3836; white-space: nowrap; }
.num { width: 87px; height: 21px; background: #fff; border-bottom: 1px solid #d5d3d0; font-size: 14.4px; text-align: right; padding-right: 5px; line-height: 21px; color: #3a3836; }
.num.second { margin-left: 12px; }
.num-step { margin-left: 3px; }
.num-labels { height: 16px; display: flex; padding-left: 102px; font-size: 13px; color: #4a4845; line-height: 16px; }
.num-labels span { width: 88px; text-align: center; }
.num-labels span + span { width: 87px; margin-left: 25px; }
.segments { display: flex; width: 214px; height: 30px; background: #e8e5e2; border-radius: 7px; margin-left: -1px; }
.seg { flex: 1; height: 30px; display: flex; justify-content: center; padding-top: 3px; }
.seg svg { width: 18px; height: 18px; }
.seg.on { background: #fff; border-radius: 6px; }

/* Annotations over the picture */
.badge { display: flex; align-items: center; justify-content: center; width: 48px; height: 48px; border-radius: 50%; background: #d3d3d3; color: #000; font-size: 28px; font-weight: 500; }
.callout { position: absolute; }
.c1 { left: 990px; top: 645px; }
.c2 { left: 1627px; top: 13px; }
.c3 { left: 1182px; top: 5px; }
.c4 { left: 1529px; top: 1119px; }
.note { position: absolute; font-size: 30px; font-weight: 400; color: #000; white-space: nowrap; line-height: 40px; }
.n1 { left: 1022px; top: 693px; letter-spacing: .65px; }
.n2 { left: 1680px; top: 35px; letter-spacing: .85px; }
.n3 { left: 1230px; top: 42px; letter-spacing: .25px; }
.n4 { left: 1577px; top: 1157px; letter-spacing: .4px; }
.line { position: absolute; background: #000; }
.l2 { left: 1770px; top: 82px; width: 2px; height: 65px; }
.l3 { left: 1360px; top: 88px; width: 264px; height: 211px; background: none; border-left: 2px solid #000; border-bottom: 2px solid #000; }
.l4 { left: 1769px; top: 539px; width: 3px; height: 612px; }
```
